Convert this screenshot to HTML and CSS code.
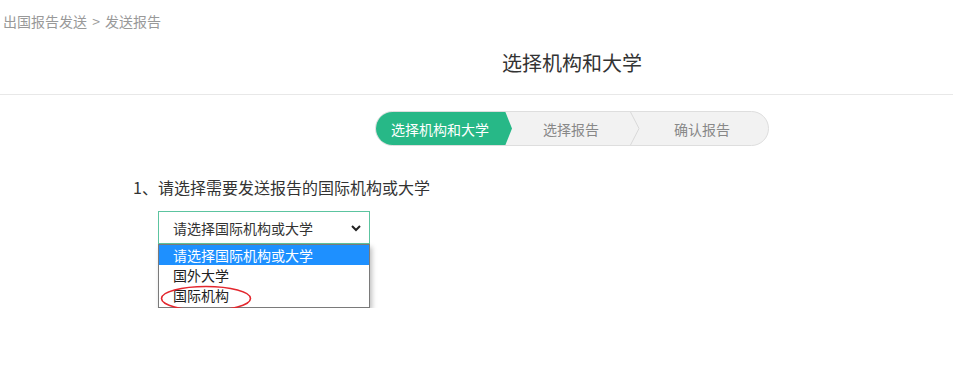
FILE: index.html
```html
<!DOCTYPE html>
<html lang="zh-CN">
<head>
<meta charset="utf-8">
<title>发送报告</title>
<link rel="stylesheet" href="styles.css">
</head>
<body>
  <div class="breadcrumb">出国报告发送 &gt; 发送报告</div>
  <header class="head">
    <h1 class="title">选择机构和大学</h1>
  </header>
  <div class="steps-wrap">
    <div class="steps">
      <div class="step step-active">选择机构和大学</div>
      <div class="step step-2">选择报告</div>
      <svg class="sep" width="10" height="35" viewBox="0 0 10 35"><polyline points="0,0 9,17.5 0,35" fill="none" stroke="#d9d9d9" stroke-width="1"/></svg>
      <div class="step step-3">确认报告</div>
    </div>
  </div>
  <section class="form">
    <p class="question">1、请选择需要发送报告的国际机构或大学</p>
    <div class="select-wrap">
      <div class="select">
        <span>请选择国际机构或大学</span>
        <svg class="caret" width="10" height="7" viewBox="0 0 10 7"><polyline points="1,1 5,5 9,1" fill="none" stroke="#222" stroke-width="2"/></svg>
      </div>
      <div class="dropdown">
        <div class="opt opt-selected">请选择国际机构或大学</div>
        <div class="opt">国外大学</div>
        <div class="opt opt-marked">国际机构
          <svg class="mark" width="92" height="27" viewBox="0 0 92 27"><ellipse cx="46" cy="13.5" rx="44.5" ry="12" fill="none" stroke="#e3262d" stroke-width="1.6"/></svg>
        </div>
      </div>
    </div>
  </section>
</body>
</html>
```
FILE: styles.css
```css
* { box-sizing: border-box; }
body {
  margin: 0;
  background: #fff;
  font-family: "Noto Sans CJK SC", "Liberation Sans", sans-serif;
  color: #333;
}
.breadcrumb {
  font-size: 14px;
  color: #999;
  padding: 11px 0 0 3px;
  height: 42px;
  line-height: 20px;
  word-spacing: 2px;
}
.head {
  border-bottom: 1px solid #e8e8e8;
  height: 53px;
  padding-left: 191px;
}
.title {
  margin: 0;
  text-align: center;
  font-size: 20px;
  font-weight: normal;
  color: #333;
  line-height: 26px;
  padding-top: 8px;
}
.steps-wrap {
  padding: 16px 0 0 191px;
  display: flex;
  justify-content: center;
}
.steps {
  width: 394px;
  height: 35px;
  display: flex;
  border: 1px solid #dedede;
  border-radius: 18px;
  background: #f2f2f2;
  overflow: hidden;
  font-size: 14px;
  color: #888;
}
.step {
  display: flex;
  align-items: center;
  justify-content: center;
  height: 33px;
}
.step-active {
  width: 137px;
  margin: -1px 0 0 -1px;
  height: 35px;
  background: #27b887;
  color: #fff;
  clip-path: polygon(0 0, 130px 0, 137px 50%, 130px 100%, 0 100%);
  padding-right: 7px;
}
.step-2 { width: 118px; }
.sep { flex: none; margin-top: -1px; }
.step-3 { flex: 1; padding-right: 4px; }
.form {
  padding-left: 133px;
}
.question {
  margin: 0;
  padding-top: 30px;
  font-size: 16px;
  line-height: 22px;
  color: #333;
}
.select-wrap {
  margin: 13px 0 0 25px;
  width: 212px;
}
.select {
  height: 33px;
  border: 1px solid #5cc4a0;
  display: flex;
  align-items: center;
  justify-content: space-between;
  padding: 0 8px 0 14px;
  font-size: 14px;
  color: #333;
  background: #fff;
}
.caret { margin-top: 1px; }
.dropdown {
  width: 212px;
  background: #fff;
  border: 1px solid #7a7a7a;
  box-shadow: 2px 3px 5px rgba(0,0,0,0.25);
  font-size: 14px;
  color: #222;
  padding-bottom: 2px;
}
.opt {
  height: 20px;
  line-height: 20px;
  padding-left: 14px;
}
.opt-selected {
  background: #1e90ff;
  color: #fff;
}
.opt-marked { position: relative; }
.mark {
  position: absolute;
  left: 1px;
  top: 0;
}
```
